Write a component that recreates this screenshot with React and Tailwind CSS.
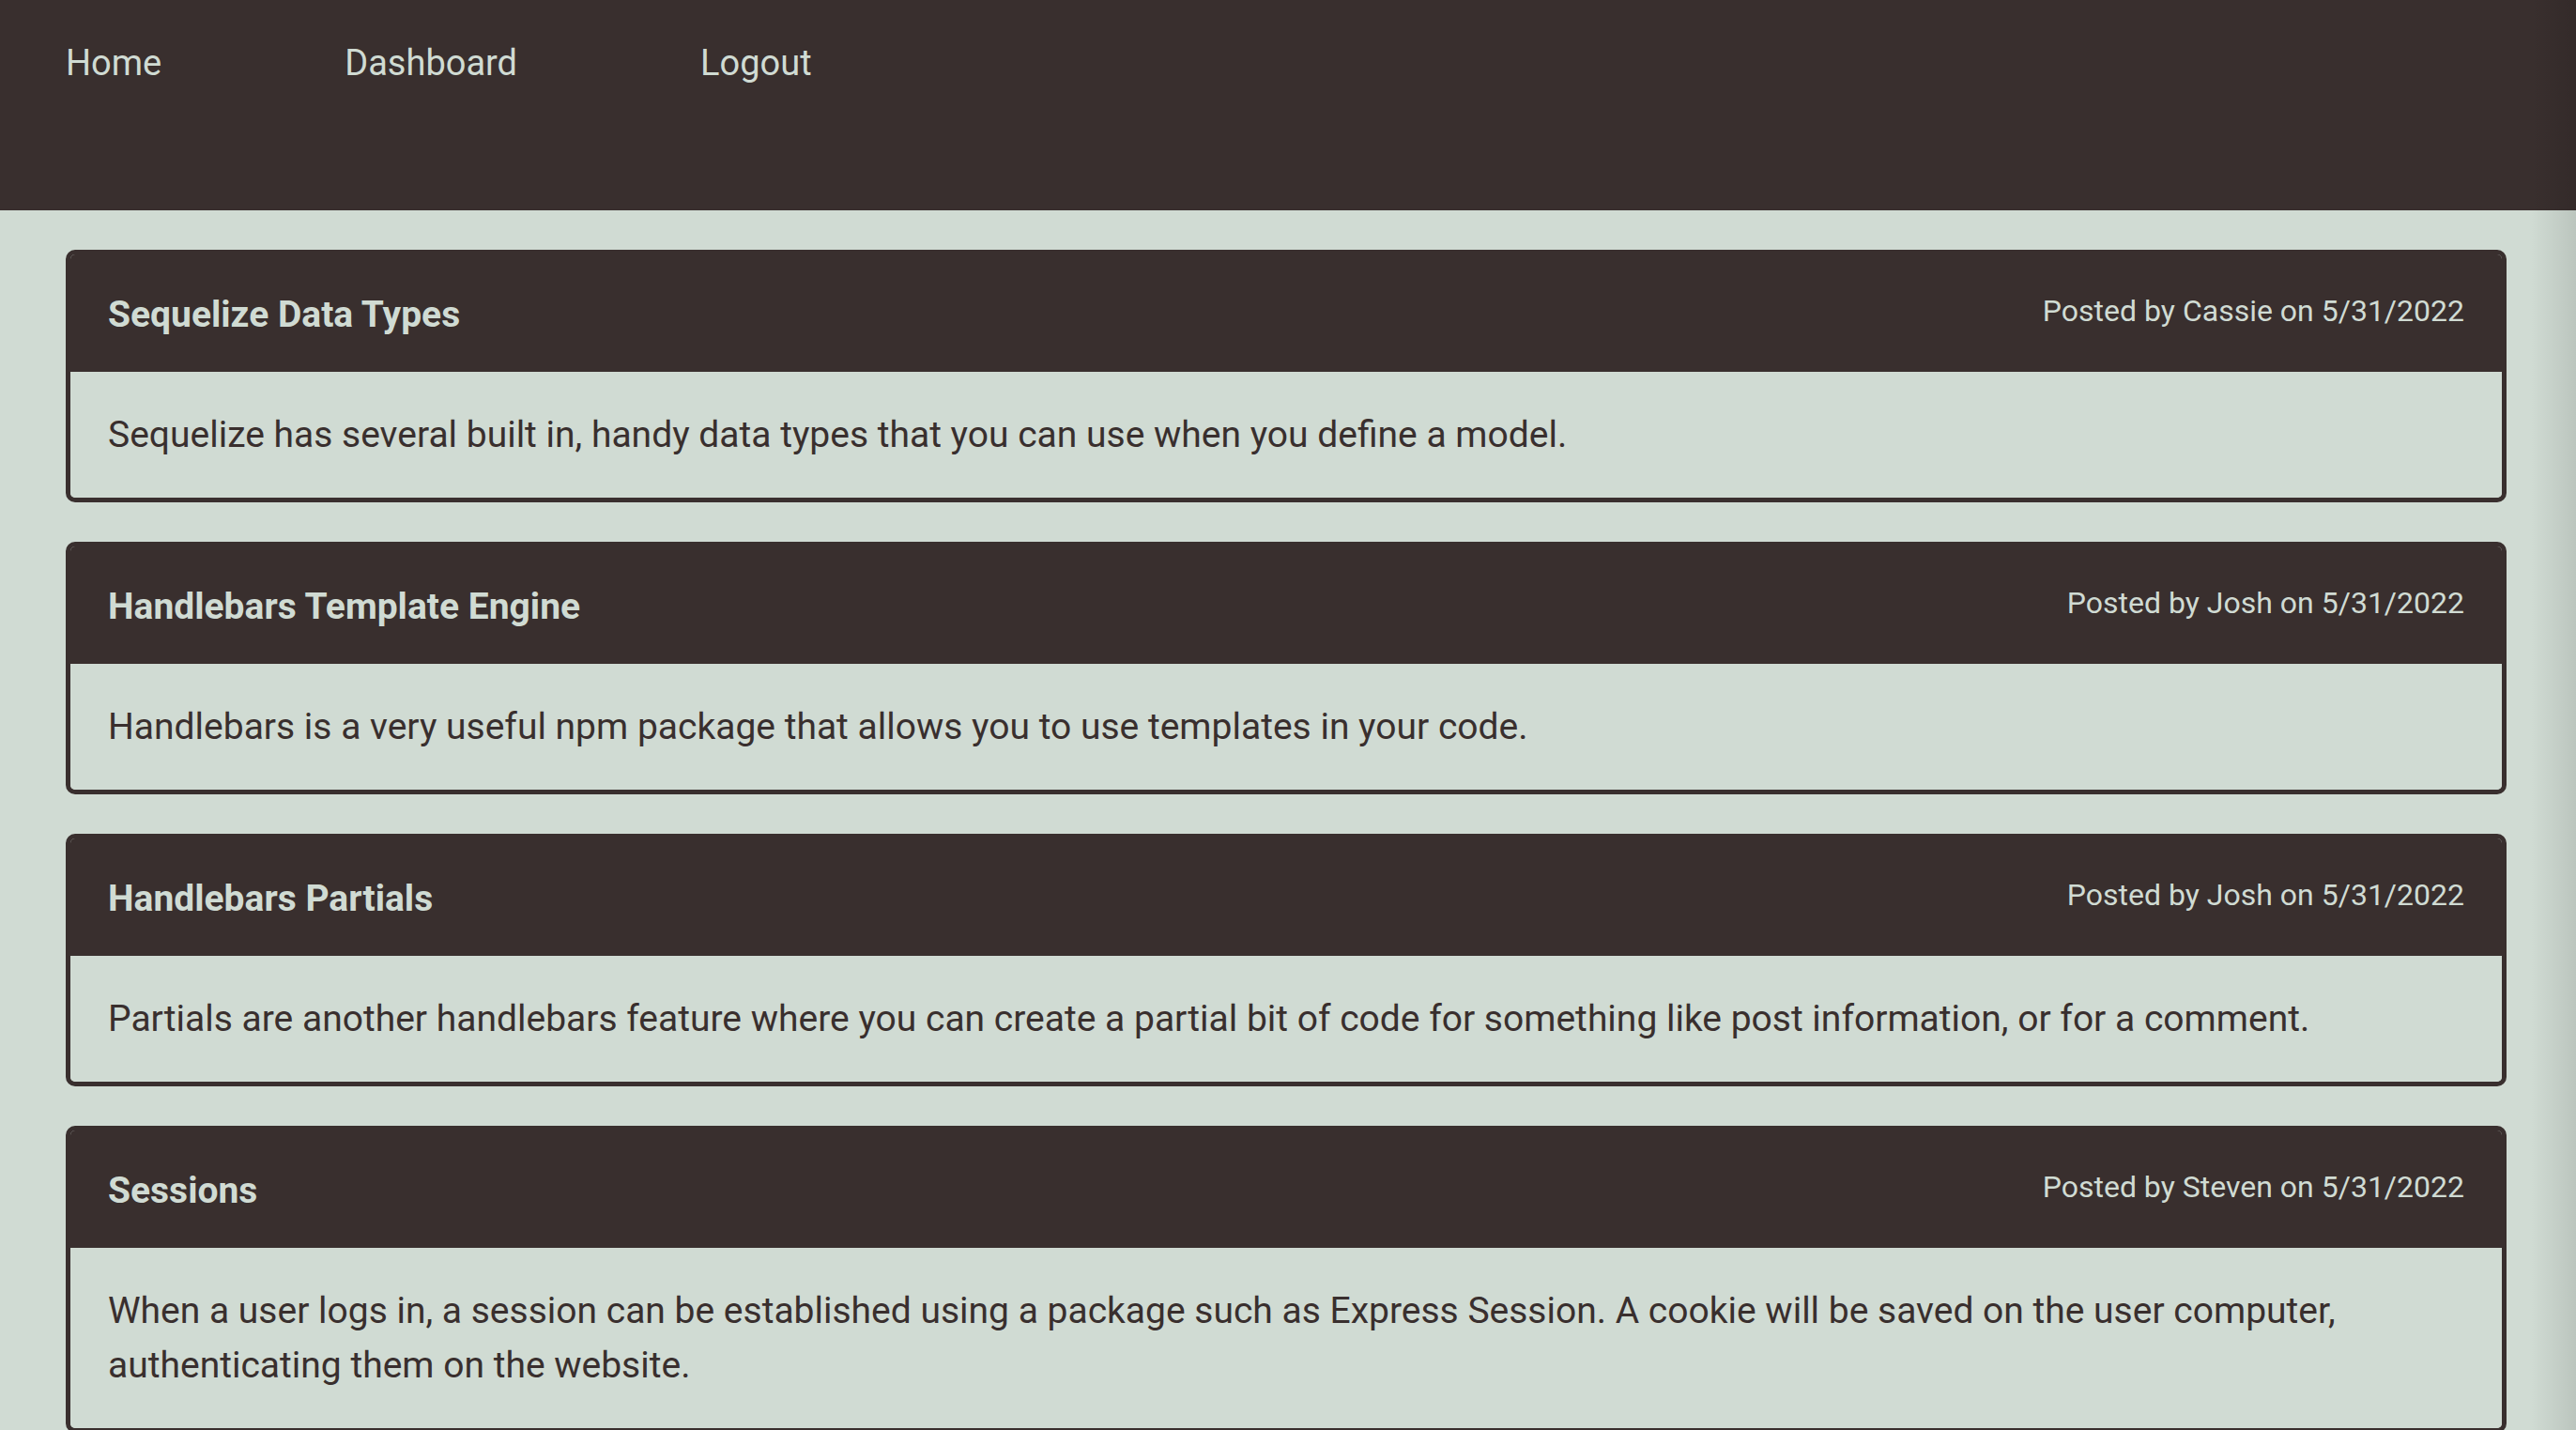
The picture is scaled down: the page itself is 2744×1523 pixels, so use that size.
import React from 'react';

const posts = [
  {
    title: 'Sequelize Data Types',
    author: 'Cassie',
    date: '5/31/2022',
    body: 'Sequelize has several built in, handy data types that you can use when you define a model.',
  },
  {
    title: 'Handlebars Template Engine',
    author: 'Josh',
    date: '5/31/2022',
    body: 'Handlebars is a very useful npm package that allows you to use templates in your code.',
  },
  {
    title: 'Handlebars Partials',
    author: 'Josh',
    date: '5/31/2022',
    body: 'Partials are another handlebars feature where you can create a partial bit of code for something like post information, or for a comment.',
  },
  {
    title: 'Sessions',
    author: 'Steven',
    date: '5/31/2022',
    body: 'When a user logs in, a session can be established using a package such as Express Session. A cookie will be saved on the user computer, authenticating them on the website.',
  },
];

const PostCard = ({ post }) => {
  return (
    <div className="border-[5px] border-[#392f2e] rounded-[10px] overflow-hidden">
      {/* header */}
      <div className="h-[125px] bg-[#392f2e] flex justify-between items-center px-[40px]">
        <h2 className="text-[39px] font-bold text-[#d0dbd3] leading-[52px] pt-[2px]">{post.title}</h2>
        <p className="text-[32px] text-[#d0dbd3] leading-[44px] pb-[5px]">
          Posted by {post.author} on {post.date}
        </p>
      </div>
      {/* body */}
      <div className="bg-[#d0dbd3] px-[40px] py-[38px]">
        <p className="text-[39px] leading-[58px] text-[#392f2e]">{post.body}</p>
      </div>
    </div>
  );
};

const App = () => {
  return (
    <div className="min-h-screen bg-[#d0dbd3] font-['Roboto',sans-serif] relative overflow-hidden">
      {/* Nav */}
      <nav className="h-[224px] bg-[#392f2e] pl-[70px] pt-[39px]">
        <ul className="flex gap-[195px] text-[38px] leading-[57px] text-[#d0dbd3]">
          <li><a href="#">Home</a></li>
          <li><a href="#">Dashboard</a></li>
          <li><a href="#">Logout</a></li>
        </ul>
      </nav>

      {/* MAIN */}
      <main className="ml-[70px] mr-[74px] pt-[42px] flex flex-col gap-[42px]">
        {posts.map((post) => (
          <PostCard key={post.title} post={post} />
        ))}
      </main>

      <div className="pointer-events-none absolute top-0 right-0 h-full w-[48px] bg-gradient-to-r from-transparent to-black/10" />
    </div>
  );
};

export default App;
